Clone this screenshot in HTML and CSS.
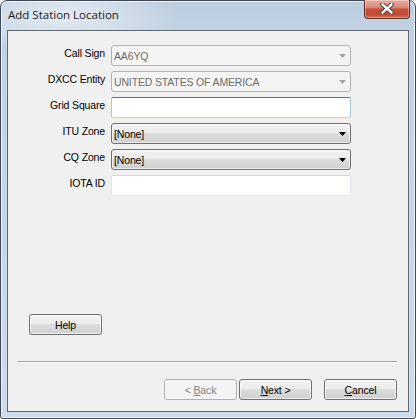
FILE: index.html
```html
<!DOCTYPE html>
<html>
<head>
<meta charset="utf-8">
<link rel="stylesheet" href="styles.css">
</head>
<body>
<div class="window">
  <div class="titlebar">
    <span class="title">Add Station Location</span>
    <div class="close">
      <svg width="14" height="11" viewBox="0 0 14 11">
        <path d="M2.5 1.5 L11.5 9.5 M11.5 1.5 L2.5 9.5" stroke="#45403f" stroke-width="4.4" stroke-linecap="square" fill="none"/>
        <path d="M2.5 1.5 L11.5 9.5 M11.5 1.5 L2.5 9.5" stroke="#ffffff" stroke-width="2.4" stroke-linecap="square" fill="none"/>
      </svg>
    </div>
  </div>
  <div class="client">
    <div class="form">
      <div class="lbl">Call Sign</div>
      <div class="field combo disabled"><span class="val">AA6YQ</span><svg class="arrow" width="7" height="4" viewBox="0 0 7 4"><path d="M0 0H7L3.5 4Z"/></svg></div>

      <div class="lbl">DXCC Entity</div>
      <div class="field combo disabled"><span class="val">UNITED STATES OF AMERICA</span><svg class="arrow" width="7" height="4" viewBox="0 0 7 4"><path d="M0 0H7L3.5 4Z"/></svg></div>

      <div class="lbl">Grid Square</div>
      <div class="field textbox focused"></div>

      <div class="lbl">ITU Zone</div>
      <div class="field combo"><span class="val">[None]</span><svg class="arrow" width="7" height="4" viewBox="0 0 7 4"><path d="M0 0H7L3.5 4Z"/></svg></div>

      <div class="lbl">CQ Zone</div>
      <div class="field combo"><span class="val">[None]</span><svg class="arrow" width="7" height="4" viewBox="0 0 7 4"><path d="M0 0H7L3.5 4Z"/></svg></div>

      <div class="lbl">IOTA ID</div>
      <div class="field textbox"></div>
    </div>

    <div class="help-row"><div class="btn"><span>Help</span></div></div>
    <div class="sep"></div>
    <div class="actions">
      <div class="btn disabled"><span>&lt; <u>B</u>ack</span></div>
      <div class="btn"><span><u>N</u>ext &gt;</span></div>
      <div class="btn cancel"><span><u>C</u>ancel</span></div>
    </div>
  </div>
</div>
</body>
</html>
```

FILE: styles.css
```css
* { box-sizing: border-box; }
html, body { margin: 0; padding: 0; }
body {
  width: 416px;
  height: 419px;
  background: #ffffff;
  font-family: "Liberation Sans", Arial, sans-serif;
}
.window {
  width: 416px;
  height: 419px;
  border: 1px solid #3c4858;
  border-radius: 7px 7px 3px 3px;
  background:
    radial-gradient(ellipse 120px 38px at 60px 14px, rgba(255,255,255,0.6), rgba(255,255,255,0) 100%),
    linear-gradient(to bottom, #bccde0 0px, #c2d2e3 30px, #cddbea 100%);
  box-shadow: inset 0 0 0 1px rgba(255,255,255,0.7);
  display: flex;
  flex-direction: column;
  padding: 0 6px 6px 6px;
}
.titlebar {
  height: 29px;
  display: flex;
  align-items: flex-start;
  justify-content: space-between;
}
.title {
  font-family: "Open Sans", "Noto Sans", sans-serif;
  font-size: 11.5px;
  color: #1b1b1b;
  margin-top: 6px;
  margin-left: 1px;
  line-height: 16px;
}
.close {
  width: 46px;
  height: 19px;
  margin-top: -1px;
  margin-right: -1px;
  border: 1px solid #6a2a1f;
  border-top: none;
  border-radius: 0 0 4px 4px;
  background: linear-gradient(to bottom, #e6ada2 0%, #d98d7f 40%, #c8533e 50%, #c04a33 80%, #cf6a52 100%);
  box-shadow: inset 0 0 0 1px rgba(255,255,255,0.35);
  display: flex;
  align-items: center;
  justify-content: center;
  padding-bottom: 1px;
}
.client {
  flex: 1;
  background: #f0f0f0;
  border: 1px solid #5d6977;
  display: flex;
  flex-direction: column;
  font-size: 10.5px;
  letter-spacing: -0.15px;
  color: #000;
}
.form {
  margin-top: 14px;
  display: grid;
  grid-template-columns: 97px 240px;
  grid-auto-rows: 21px;
  column-gap: 6px;
  row-gap: 5px;
}
.lbl {
  text-align: right;
  padding-top: 2px;
  line-height: 12px;
  white-space: nowrap;
}
.field {
  border: 1px solid #707070;
  border-radius: 2px;
  display: flex;
  align-items: center;
  padding: 0 4px 0 2px;
  line-height: 12px;
}
.field .val { flex: 1; white-space: nowrap; padding-top: 1px; }
.combo {
  border-radius: 3px;
  background: linear-gradient(to bottom, #f2f2f2 0%, #ebebeb 50%, #dddddd 50%, #cfcfcf 100%);
  box-shadow: inset 0 0 0 1px rgba(255,255,255,0.6);
}
.combo .arrow path { fill: #000; }
.combo.disabled {
  background: #f4f4f4;
  border-color: #b3b3b3;
  box-shadow: none;
  color: #6d6d6d;
}
.combo.disabled .arrow path { fill: #a3a3a3; }
.textbox {
  background: #ffffff;
  border-color: #d3d6db #e2e3ea #e3e9ef #e2e3ea;
}
.textbox.focused {
  border-color: #3d7bad #a4c9e3 #b7d9ed #a4c9e3;
}
.help-row {
  margin-top: 118px;
  padding-left: 21px;
  display: flex;
}
.btn {
  width: 73px;
  height: 21px;
  border: 1px solid #707070;
  border-radius: 3px;
  background: linear-gradient(to bottom, #f2f2f2 0%, #ebebeb 50%, #dddddd 50%, #cfcfcf 100%);
  box-shadow: inset 0 0 0 1px rgba(255,255,255,0.7);
  display: flex;
  align-items: center;
  justify-content: center;
  line-height: 12px;
  padding-top: 1px;
  color: #000;
  white-space: pre;
}
.btn u { text-decoration: underline; text-underline-offset: 1px; }
.btn.disabled {
  background: #f4f4f4;
  border-color: #adb2b5;
  box-shadow: none;
  color: #838383;
}
.sep {
  margin: 26px 11px 0 10px;
  height: 2px;
  border-top: 1px solid #a0a0a0;
  border-bottom: 1px solid #ffffff;
}
.actions {
  margin-top: 16px;
  padding-right: 11px;
  display: flex;
  justify-content: flex-end;
  gap: 2px;
}
.btn.cancel { margin-left: 10px; }
```
